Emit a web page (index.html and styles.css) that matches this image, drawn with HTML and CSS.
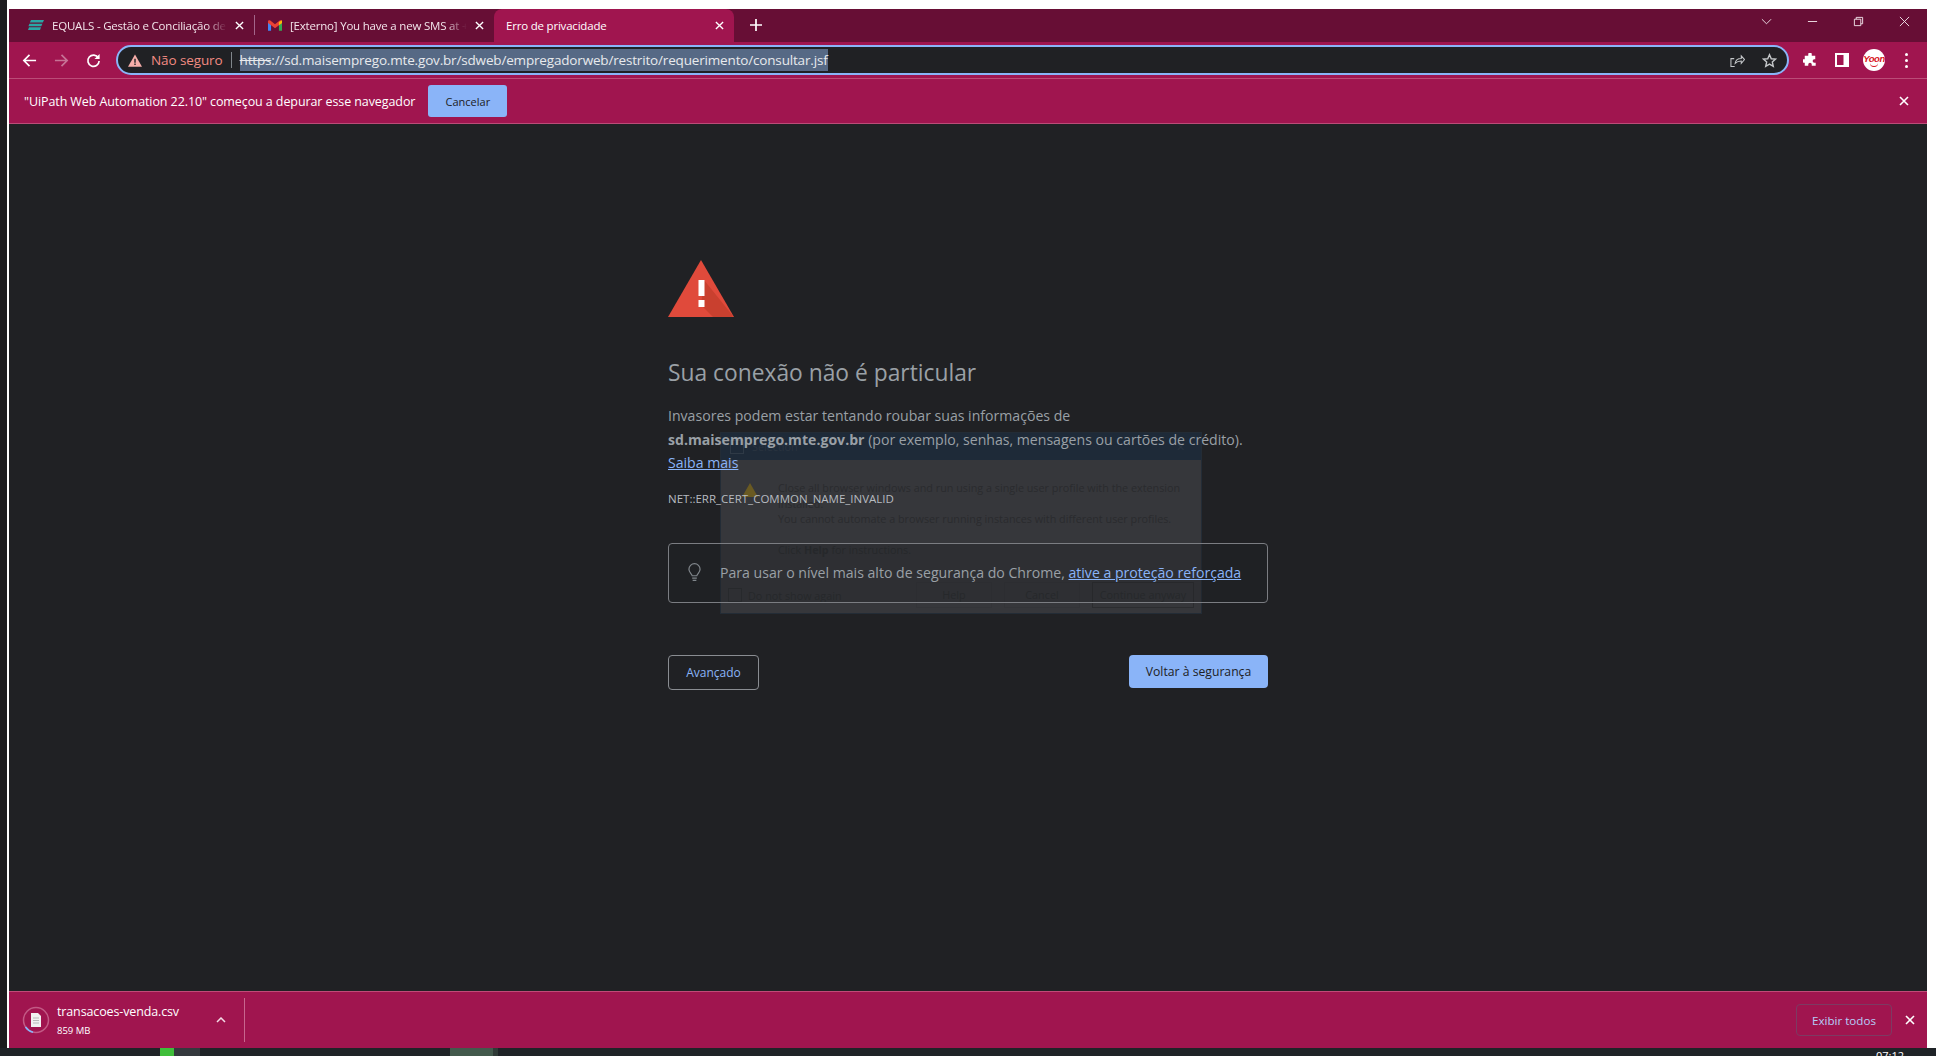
FILE: index.html
```html
<!DOCTYPE html>
<html lang="pt-BR">
<head>
    <meta charset="UTF-8">
    <title>Erro de privacidade</title>
    <link rel="stylesheet" href="styles.css">
</head>
<body>
    <div class="desktop">
        <div class="edge-left"></div>
        <div class="window">
            <div class="tabstrip">
                <div class="tab tab-first">
                    <svg class="favicon" viewBox="0 0 16 10"><path fill="#2aa6a6" d="M3 0h13l-1.2 2.6H1.8zM1.4 3.7h13l-1.1 2.5H.4zM1 7.3h12L12 10H0z"/></svg>
                    <span class="tab-title">EQUALS - Gestão e Conciliação de Cartões</span>
                    <svg class="tab-close" viewBox="0 0 10 10"><path d="M1 1l8 8M9 1L1 9"/></svg>
                </div>
                <div class="tab-sep"></div>
                <div class="tab tab-second">
                    <svg class="favicon gmail" viewBox="0 0 16 12"><path fill="#4285f4" d="M0 2v10h3.5V4.6z"/><path fill="#34a853" d="M12.5 4.6V12H16V2z"/><path fill="#ea4335" d="M0 1.6C0 .2 1.500-.4 2.600.4L8 4.500 13.400.4C14.500-.4 16 .2 16 1.600V3l-3.500 2.600L8 9 3.500 5.600 0 3z"/><path fill="#fbbc04" d="M12.500 1.900 16 0v3l-3.500 2.600z"/></svg>
                    <span class="tab-title">[Externo] You have a new SMS at +55 11</span>
                    <svg class="tab-close" viewBox="0 0 10 10"><path d="M1 1l8 8M9 1L1 9"/></svg>
                </div>
                <div class="tab tab-active">
                    <span class="tab-title">Erro de privacidade</span>
                    <svg class="tab-close" viewBox="0 0 10 10"><path d="M1 1l8 8M9 1L1 9"/></svg>
                </div>
                <svg class="new-tab" viewBox="0 0 12 12"><path d="M6 0v12M0 6h12"/></svg>
                <div class="window-controls">
                    <svg class="win-icon" viewBox="0 0 12 12"><path d="M1 3.500l5 5 5-5"/></svg>
                    <svg class="win-icon" viewBox="0 0 12 12"><path d="M1 6h10"/></svg>
                    <svg class="win-icon" viewBox="0 0 12 12"><path d="M1.500 3.500h7v7h-7zM3.500 3.500v-2h7v7h-2"/></svg>
                    <svg class="win-icon" viewBox="0 0 12 12"><path d="M1 1l10 10M11 1L1 11"/></svg>
                </div>
            </div>

            <div class="toolbar">
                <svg class="nav-icon" viewBox="0 0 16 16"><path d="M15 8H2M8 2L2 8l6 6"/></svg>
                <svg class="nav-icon nav-off" viewBox="0 0 16 16"><path d="M1 8h13M8 2l6 6-6 6"/></svg>
                <svg class="nav-icon" viewBox="0 0 16 16"><path d="M13.200 5.200A6 6 0 1 0 14 8.500"/><path class="solid" d="M14.500 1v5.500H9z"/></svg>
                <div class="omnibox">
                    <svg class="warn-icon" viewBox="0 0 16 14"><path fill="#f6aea9" d="M8 0l8 14H0z"/><path fill="#202124" d="M7.200 5h1.600v4.500H7.200zM7.200 10.500h1.600V12H7.200z"/></svg>
                    <span class="not-secure">Não seguro</span>
                    <span class="omni-sep"></span>
                    <span class="url"><s>https</s>://sd.maisemprego.mte.gov.br/sdweb/empregadorweb/restrito/requerimento/consultar.jsf</span>
                    <svg class="omni-icon share" viewBox="0 0 16 16"><path d="M5 14.500H1V6h3.500M5.500 11c.5-3.500 3-5.200 6.500-5.200V3l3.500 4-3.500 4V8.500c-2.500 0-4.800.7-6.500 2.500z"/></svg>
                    <svg class="omni-icon star" viewBox="0 0 16 16"><path d="M8 1.800l1.900 4.300 4.600.4-3.500 3.100 1 4.600L8 11.800l-4 2.400 1-4.600-3.500-3.100 4.600-.4z"/></svg>
                </div>
                <svg class="tool-icon puzzle" viewBox="0 0 16 16"><path d="M6 1.500a2 2 0 0 1 4 0V3h4v4h-1a2 2 0 0 0 0 4h1.500v3.500H10V13a2 2 0 0 0-4 0v1.500H2V11H1a2 2 0 0 1 0-4h1V3h4z"/></svg>
                <svg class="tool-icon panel" viewBox="0 0 14 14"><path fill-rule="evenodd" d="M0 0h14v14H0zM2 2v10h6.500V2z"/></svg>
                <div class="avatar">Yoon</div>
                <div class="menu-dots"><i></i><i></i><i></i></div>
            </div>

            <div class="infobar">
                <span class="infobar-text">"UiPath Web Automation 22.10" começou a depurar esse navegador</span>
                <button class="infobar-btn">Cancelar</button>
                <svg class="bar-close" viewBox="0 0 10 10"><path d="M1 1l8 8M9 1L1 9"/></svg>
            </div>

            <main class="page">
                <div class="ghost-dialog">
                    <div class="ghost-head"><span class="ghost-logo"></span>Selection<span class="ghost-x">✕</span></div>
                    <div class="ghost-body">
                        <svg class="ghost-warn" viewBox="0 0 16 14"><path fill="#6a5a22" d="M8 0l8 14H0z"/></svg>
                        <div class="ghost-copy">
                            <p>Close all browser windows and run using a single user profile with the extension installed.<br>You cannot automate a browser running instances with different user profiles.</p>
                            <p>Click <b>Help</b> for instructions.</p>
                        </div>
                    </div>
                    <div class="ghost-foot">
                        <span class="ghost-check"></span>
                        <span class="ghost-label">Do not show again</span>
                        <span class="ghost-btn">Help</span>
                        <span class="ghost-btn">Cancel</span>
                        <span class="ghost-btn ghost-main">Continue anyway</span>
                    </div>
                </div>

                <div class="interstitial">
                    <svg class="danger-icon" viewBox="0 0 66 57">
                        <path fill="#e04a3b" d="M33 0l33 57H0z"/>
                        <path fill="#c9402f" d="M36 20l29 36-1 1H45l-12-12z"/>
                        <path fill="#fff" d="M30.500 20h6v16h-6zM30.500 40h6v7h-6z"/>
                    </svg>
                    <h1 class="title">Sua conexão não é particular</h1>
                    <p class="message">Invasores podem estar tentando roubar suas informações de <b>sd.maisemprego.mte.gov.br</b> (por exemplo, senhas, mensagens ou cartões de crédito). <a href="#">Saiba mais</a></p>
                    <div class="error-code">NET::ERR_CERT_COMMON_NAME_INVALID</div>
                    <div class="enhanced">
                        <svg class="bulb" viewBox="0 0 14 20"><path d="M4.500 13.500C4 11 1 10 1 6.500a6 6 0 0 1 12 0c0 3.500-3 4.500-3.500 7z"/><path d="M4.500 16h5M5 18.500h4"/></svg>
                        <span>Para usar o nível mais alto de segurança do Chrome, <a href="#">ative a proteção reforçada</a></span>
                    </div>
                    <div class="actions">
                        <button class="btn-outline">Avançado</button>
                        <button class="btn-primary">Voltar à segurança</button>
                    </div>
                </div>
            </main>

            <div class="downloads">
                <div class="dl-icon">
                    <svg class="dl-ring" viewBox="0 0 28 28"><circle cx="14" cy="14" r="12.500"/><path d="M3.500 21A12.500 12.500 0 0 0 11 26.200"/></svg>
                    <svg class="dl-file" viewBox="0 0 10 14"><path fill="#f1f1f1" d="M0 0h7l3 3v11H0z"/><path stroke="#b9b9b9" d="M2 5h6M2 7.500h6M2 10h6"/></svg>
                </div>
                <div class="dl-info">
                    <div class="dl-name">transacoes-venda.csv</div>
                    <div class="dl-size">859 MB</div>
                </div>
                <svg class="dl-chevron" viewBox="0 0 10 6"><path d="M1 5l4-4 4 4"/></svg>
                <span class="dl-sep"></span>
                <button class="show-all">Exibir todos</button>
                <svg class="bar-close dl-close" viewBox="0 0 10 10"><path d="M1 1l8 8M9 1L1 9"/></svg>
            </div>
        </div>
        <div class="edge-right"></div>
    </div>
    <div class="taskbar">
        <span class="task-green"></span>
        <span class="task-gray"></span>
        <span class="task-app"></span>
        <span class="task-app2"></span>
        <span class="task-clock">07:12</span>
    </div>
</body>
</html>
```

FILE: styles.css
```css
* {
    box-sizing: border-box;
}

html, body {
    margin: 0;
    height: 1056px;
    overflow: hidden;
}

body {
    background: #fff;
    font-family: "Open Sans", "Noto Sans", sans-serif;
    color: #fff;
}

p {
    margin: 0;
}

.desktop {
    display: flex;
    height: 1048px;
}

.edge-left {
    width: 7px;
    background: #1c1c1e;
    margin-right: 2px;
}

.edge-right {
    width: 9px;
}

.window {
    flex: 1;
    display: flex;
    flex-direction: column;
    margin-top: 9px;
    min-width: 0;
}

/* tabs */
.tabstrip {
    height: 33px;
    background: #670e35;
    display: flex;
    align-items: stretch;
    padding-left: 7px;
    flex-shrink: 0;
}

.tab {
    width: 239px;
    display: flex;
    align-items: center;
    font-size: 11.500px;
    letter-spacing: -0.2px;
    padding: 0 10px 1px 12px;
    color: #f2e4ea;
}

.tab-first {
    width: 238px;
}

.tab-second {
    width: 239px;
    padding-left: 13px;
}

.tab-active {
    background: #a0154f;
    width: 240px;
    color: #fff;
    border-radius: 8px 8px 0 0;
}

.tab-sep {
    width: 1px;
    margin: 6px 0 7px;
    background: #a3668a;
}

.favicon {
    width: 16px;
    height: 10px;
    margin-right: 8px;
    flex-shrink: 0;
}

.gmail {
    width: 14px;
    height: 11px;
    margin-right: 8px;
}

.tab-title {
    flex: 1;
    white-space: nowrap;
    overflow: hidden;
    -webkit-mask-image: linear-gradient(to right, #000 88%, transparent 100%);
    mask-image: linear-gradient(to right, #000 88%, transparent 100%);
}

.tab-active .tab-title {
    -webkit-mask-image: none;
    mask-image: none;
}

.tab-close {
    width: 9px;
    height: 9px;
    margin-left: 8px;
    flex-shrink: 0;
    fill: none;
    stroke: #fff;
    stroke-width: 1.500;
}

.new-tab {
    width: 12px;
    height: 12px;
    margin: 10px 0 0 16px;
    fill: none;
    stroke: #fff;
    stroke-width: 1.700;
}

.window-controls {
    margin-left: auto;
    display: flex;
    align-items: flex-start;
    gap: 35px;
    padding: 7px 17px 0 0;
}

.win-icon {
    width: 11px;
    height: 11px;
    fill: none;
    stroke: #f3e7ec;
    stroke-width: 1;
}

/* toolbar */
.toolbar {
    height: 37px;
    background: #a0154f;
    border-bottom: 1px solid #bb4c78;
    display: flex;
    align-items: center;
    padding-left: 13px;
    flex-shrink: 0;
}

.nav-icon {
    width: 15px;
    height: 15px;
    margin-right: 17px;
    fill: none;
    stroke: #fff;
    stroke-width: 1.800;
}

.nav-icon .solid {
    fill: #fff;
    stroke: none;
}

.nav-off {
    opacity: 0.4;
}

.omnibox {
    width: 1673px;
    height: 30px;
    margin-left: -2px;
    border: 2px solid #8ab4f8;
    border-radius: 15px;
    background: #202124;
    display: flex;
    align-items: center;
    padding-left: 10px;
    font-size: 13.500px;
    flex-shrink: 0;
}

.warn-icon {
    width: 14px;
    height: 13px;
    margin-right: 9px;
}

.not-secure {
    color: #f28b82;
    letter-spacing: -0.1px;
}

.omni-sep {
    width: 1px;
    height: 16px;
    background: #80868b;
    margin: 0 8px;
}

.url {
    background: #566985;
    line-height: 22px;
    color: #e8eaed;
    white-space: nowrap;
    letter-spacing: -0.17px;
}

.url s {
    text-decoration-thickness: 1px;
}

.omni-icon {
    width: 15px;
    height: 15px;
    fill: none;
    stroke: #c4c7c9;
    stroke-width: 1.100;
}

.share {
    margin-left: auto;
    margin-right: 17px;
}

.star {
    margin-right: 10px;
    stroke-width: 1.500;
}

.tool-icon {
    margin-left: 14px;
    width: 14px;
    height: 14px;
    fill: #fff;
}

.panel {
    margin-left: 18px;
}

.avatar {
    width: 22px;
    height: 22px;
    border-radius: 50%;
    background: #fff;
    color: #d8131b;
    font: italic 700 9.500px/19px "Liberation Sans", sans-serif;
    letter-spacing: -0.5px;
    text-align: center;
    overflow: hidden;
    margin-left: 14px;
    flex-shrink: 0;
    position: relative;
}

.avatar::after {
    content: "";
    position: absolute;
    left: 7px;
    top: 13px;
    width: 8px;
    height: 4px;
    border-bottom: 1px solid #d8131b;
    border-radius: 0 0 8px 8px;
}

.menu-dots {
    display: flex;
    flex-direction: column;
    gap: 3px;
    margin-left: 20px;
}

.menu-dots i {
    width: 3px;
    height: 3px;
    background: #fff;
    border-radius: 50%;
}

/* debug bar */
.infobar {
    height: 45px;
    background: #a0154f;
    border-bottom: 1px solid #bb4c78;
    display: flex;
    align-items: center;
    padding: 0 18px 0 15px;
    font-size: 12.500px;
    flex-shrink: 0;
}

.infobar-text {
    letter-spacing: -0.09px;
}

.infobar-btn {
    margin-left: 13px;
    width: 79px;
    height: 32px;
    background: #8ab4f8;
    border: none;
    border-radius: 3px;
    color: #202124;
    font: 500 11px "Open Sans", sans-serif;
}

.bar-close {
    width: 10px;
    height: 10px;
    margin-left: auto;
    fill: none;
    stroke: #fff;
    stroke-width: 1.600;
}

/* interstitial */
.page {
    flex: 1;
    position: relative;
    background: #202124;
    min-height: 0;
}

.interstitial {
    position: relative;
    width: 600px;
    margin: 0 auto;
    padding-top: 136px;
    color: #9aa0a6;
}

.danger-icon {
    display: block;
    width: 66px;
    height: 57px;
}

.title {
    margin: 41px 0 0;
    font-size: 22.800px;
    font-weight: 400;
    line-height: 30px;
    color: #9aa0a6;
}

.message {
    margin-top: 16px;
    font-size: 14.100px;
    line-height: 23.500px;
}

.message b {
    font-weight: 700;
}

.interstitial a {
    color: #8ab4f8;
}

.error-code {
    margin-top: 14px;
    font-size: 11.500px;
    line-height: 20px;
    color: #b7bbc0;
}

.enhanced {
    margin-top: 34px;
    height: 60px;
    border: 1px solid #7b7d82;
    border-radius: 4px;
    display: flex;
    align-items: center;
    font-size: 14.100px;
    padding-left: 19px;
    background: rgba(32, 33, 36, 0.35);
}

.bulb {
    width: 13px;
    height: 19px;
    margin-right: 19px;
    fill: none;
    stroke: #80868b;
    stroke-width: 1.300;
}

.actions {
    margin-top: 52px;
    display: flex;
    justify-content: space-between;
    align-items: flex-start;
}

.btn-outline {
    width: 91px;
    height: 35px;
    background: transparent;
    border: 1px solid #8a8d92;
    border-radius: 4px;
    color: #8ab4f8;
    font: 12px "Open Sans", sans-serif;
}

.btn-primary {
    width: 139px;
    height: 33px;
    background: #8ab4f8;
    border: none;
    border-radius: 4px;
    color: #202124;
    font: 12.200px "Open Sans", sans-serif;
}

/* faded dialog behind the page */
.ghost-dialog {
    position: absolute;
    left: 711px;
    top: 308px;
    width: 482px;
    height: 182px;
    background: #36373b;
    border: 1px solid #232c36;
    color: #2a2b2e;
    font-size: 10.800px;
    display: flex;
    flex-direction: column;
}

.ghost-head {
    height: 27px;
    background: #1e2a38;
    display: flex;
    align-items: center;
    padding-left: 9px;
    color: #2a3440;
    flex-shrink: 0;
}

.ghost-logo {
    width: 14px;
    height: 14px;
    border: 1px solid #2f3a46;
    margin-right: 8px;
}

.ghost-x {
    margin-left: auto;
    margin-right: 16px;
}

.ghost-body {
    display: flex;
    flex: 1;
    padding: 20px 14px 0 21px;
    min-height: 0;
}

.ghost-warn {
    width: 16px;
    height: 14px;
    margin: 3px 20px 0 0;
    flex-shrink: 0;
}

.ghost-copy p {
    line-height: 15.500px;
    margin-bottom: 15px;
}

.ghost-foot {
    display: flex;
    align-items: center;
    height: 28px;
    margin-bottom: 4px;
    padding-left: 7px;
    flex-shrink: 0;
}

.ghost-check {
    width: 14px;
    height: 14px;
    border: 1px solid #2c2d30;
    margin-right: 6px;
}

.ghost-label {
    width: 168px;
}

.ghost-btn {
    width: 76px;
    height: 26px;
    line-height: 24px;
    text-align: center;
    border: 1px solid #333438;
    margin-right: 12px;
}

.ghost-main {
    width: 102px;
    border-color: #2b2c2f;
    margin-right: 0;
}

/* downloads */
.downloads {
    height: 57px;
    background: #a0154f;
    border-top: 1px solid #c04a78;
    display: flex;
    align-items: center;
    padding: 0 12px 0 13px;
    flex-shrink: 0;
}

.dl-icon {
    width: 28px;
    height: 28px;
    position: relative;
    display: flex;
    align-items: center;
    justify-content: center;
    flex-shrink: 0;
}

.dl-ring {
    position: absolute;
    inset: 0;
    fill: none;
    stroke: #c25a85;
    stroke-width: 1.500;
}

.dl-ring path {
    stroke: #8ab4f8;
}

.dl-file {
    width: 10px;
    height: 14px;
}

.dl-info {
    margin-left: 7px;
    width: 150px;
}

.dl-name {
    font-size: 12.500px;
    line-height: 18px;
    letter-spacing: -0.13px;
}

.dl-size {
    font-size: 9.500px;
    line-height: 14px;
    margin-top: 3px;
}

.dl-chevron {
    width: 10px;
    height: 6px;
    margin-left: 9px;
    fill: none;
    stroke: #f3dce6;
    stroke-width: 1.500;
}

.dl-sep {
    width: 1px;
    height: 44px;
    background: #c8668e;
    margin-left: 18px;
}

.show-all {
    margin-left: auto;
    width: 96px;
    height: 32px;
    background: transparent;
    border: 1px solid #7d3a62;
    border-radius: 4px;
    color: #b5cdf8;
    font: 500 11.600px "Open Sans", sans-serif;
}

.dl-close {
    margin-left: 13px;
    margin-right: 0;
}

/* bottom of the desktop */
.taskbar {
    height: 8px;
    background: #1f2327;
    display: flex;
    padding-left: 160px;
    position: relative;
    overflow: hidden;
}

.task-green {
    width: 14px;
    background: #3fbe3a;
}

.task-gray {
    width: 26px;
    background: #34393d;
}

.task-app {
    width: 43px;
    margin-left: 250px;
    background: #43594c;
}

.task-app2 {
    width: 5px;
    background: #2f3a36;
}

.task-clock {
    position: absolute;
    right: 32px;
    top: 1px;
    font-size: 11px;
    line-height: 14px;
}
```
